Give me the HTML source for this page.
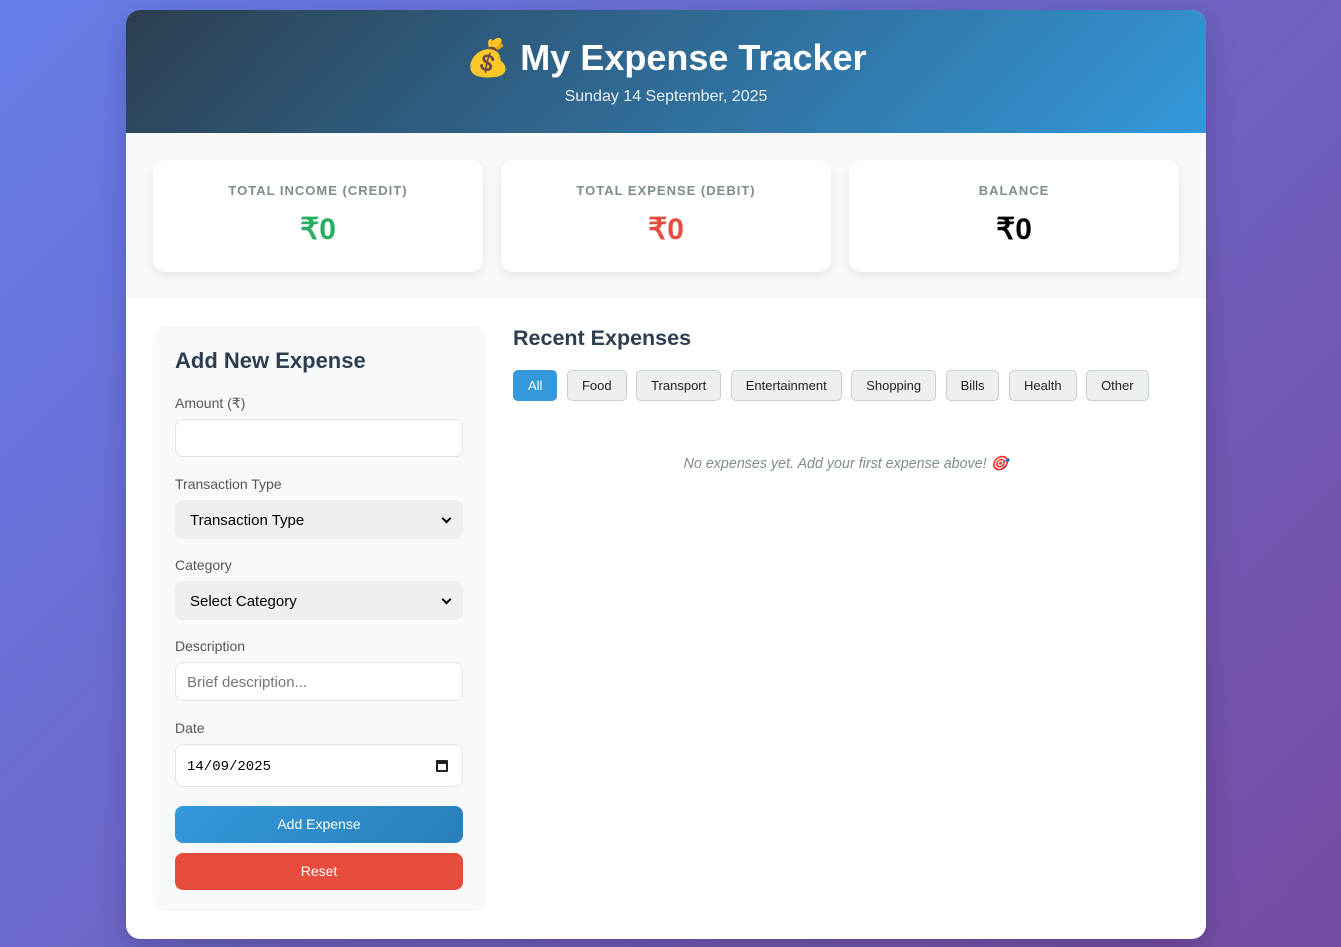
<!DOCTYPE html>
<html><head><meta charset="utf-8"><style>
*{box-sizing:border-box;margin:0;padding:0}
body{width:1341px;height:947px;overflow:hidden;font-family:"Liberation Sans",sans-serif;background:linear-gradient(135deg,#667eea 0%,#764ba2 100%);}
.wrap{position:absolute;left:126px;top:10px;width:1080px;height:929px;background:#fff;border-radius:14px;overflow:hidden;box-shadow:0 10px 30px rgba(0,0,0,.2)}
.hdr{height:123px;background:linear-gradient(135deg,#2c3e50,#3498db);color:#fff;text-align:center}
.hdr h1{font-size:36px;font-weight:bold;padding-top:26px;line-height:44px}
.hdr p{font-size:16px;margin-top:8px;opacity:.9}
.stats{background:#f8f9fa;height:166px;padding:27px 27px;display:flex;gap:18px}
.card{flex:1;background:#fff;border-radius:12px;box-shadow:0 4px 12px rgba(0,0,0,.08);text-align:center;height:112px}
.card .l{font-size:13px;font-weight:bold;color:#7f8c8d;letter-spacing:1px;margin-top:23px}
.card .v{font-size:30px;font-weight:bold;margin-top:14px}
.form{position:absolute;left:27px;top:316px;width:333px;height:585px;background:#f8f9fa;border-radius:12px;padding:22px}
.form h2{font-size:22px;color:#2c3e50;margin-bottom:21px}
label{display:block;font-size:14px;line-height:16px;color:#555;margin-bottom:8px}
.in{height:38px;width:288px;border:1px solid #e1e5e9;border-radius:8px;background:#fff;margin-bottom:19px;font-size:15px;padding:2px 11px 0;line-height:36px;position:relative}
.sel{background:#efefef;border-color:#efefef;color:#000;padding-left:14px;height:39px;margin-bottom:18px}
.sel:after{content:"";position:absolute;right:12px;top:14px;width:5px;height:5px;border-right:2px solid #000;border-bottom:2px solid #000;transform:rotate(45deg)}
.btn{width:288px;height:37px;border-radius:8px;color:#fff;text-align:center;line-height:37px;font-size:14px}
.list{position:absolute;left:387px;top:316px}
.list h2{font-size:21.5px;color:#2c3e50;margin-top:0}
.f{display:flex;gap:9.5px;margin-top:19px}
.f span{height:31px;line-height:29px;padding:0 14px;border:1px solid #ccc;background:#ecf0f1;border-radius:5px;font-size:13px;color:#222}
.f span.a{background:#3498db;color:#fff;border-color:#3498db}
.empty{position:absolute;left:387px;top:446px;width:666px;text-align:center;color:#7f8c8d;font-style:italic;font-size:14.3px}
</style></head><body>
<div class="wrap">
<div class="hdr"><h1>💰 My Expense Tracker</h1><p>Sunday 14 September, 2025</p></div>
<div class="stats">
<div class="card"><div class="l">TOTAL INCOME (CREDIT)</div><div class="v" style="color:#27ae60">₹0</div></div>
<div class="card"><div class="l">TOTAL EXPENSE (DEBIT)</div><div class="v" style="color:#e74c3c">₹0</div></div>
<div class="card"><div class="l">BALANCE</div><div class="v" style="color:#000">₹0</div></div>
</div>
<div class="form">
<h2>Add New Expense</h2>
<label>Amount (₹)</label><div class="in"></div>
<label>Transaction Type</label><div class="in sel">Transaction Type</div>
<label>Category</label><div class="in sel">Select Category</div>
<label>Description</label><div class="in" style="color:#777;height:39px">Brief description...</div>
<label>Date</label><div class="in" style="font-family:'Liberation Mono',monospace;font-size:14px;height:43px;line-height:41px">14/09/2025<span style="position:absolute;right:14px;top:15px;width:12px;height:12px;border:2px solid #222;border-top-width:4px;border-radius:1px"></span></div>
<div class="btn" style="background:linear-gradient(135deg,#3498db,#2980b9)">Add Expense</div>
<div class="btn" style="background:#e74c3c;margin-top:10px">Reset</div>
</div>
<div class="list"><h2>Recent Expenses</h2>
<div class="f"><span class="a">All</span><span>Food</span><span>Transport</span><span>Entertainment</span><span>Shopping</span><span>Bills</span><span>Health</span><span>Other</span></div></div>
<div class="empty">No expenses yet. Add your first expense above! 🎯</div>
</div>
</body></html>
